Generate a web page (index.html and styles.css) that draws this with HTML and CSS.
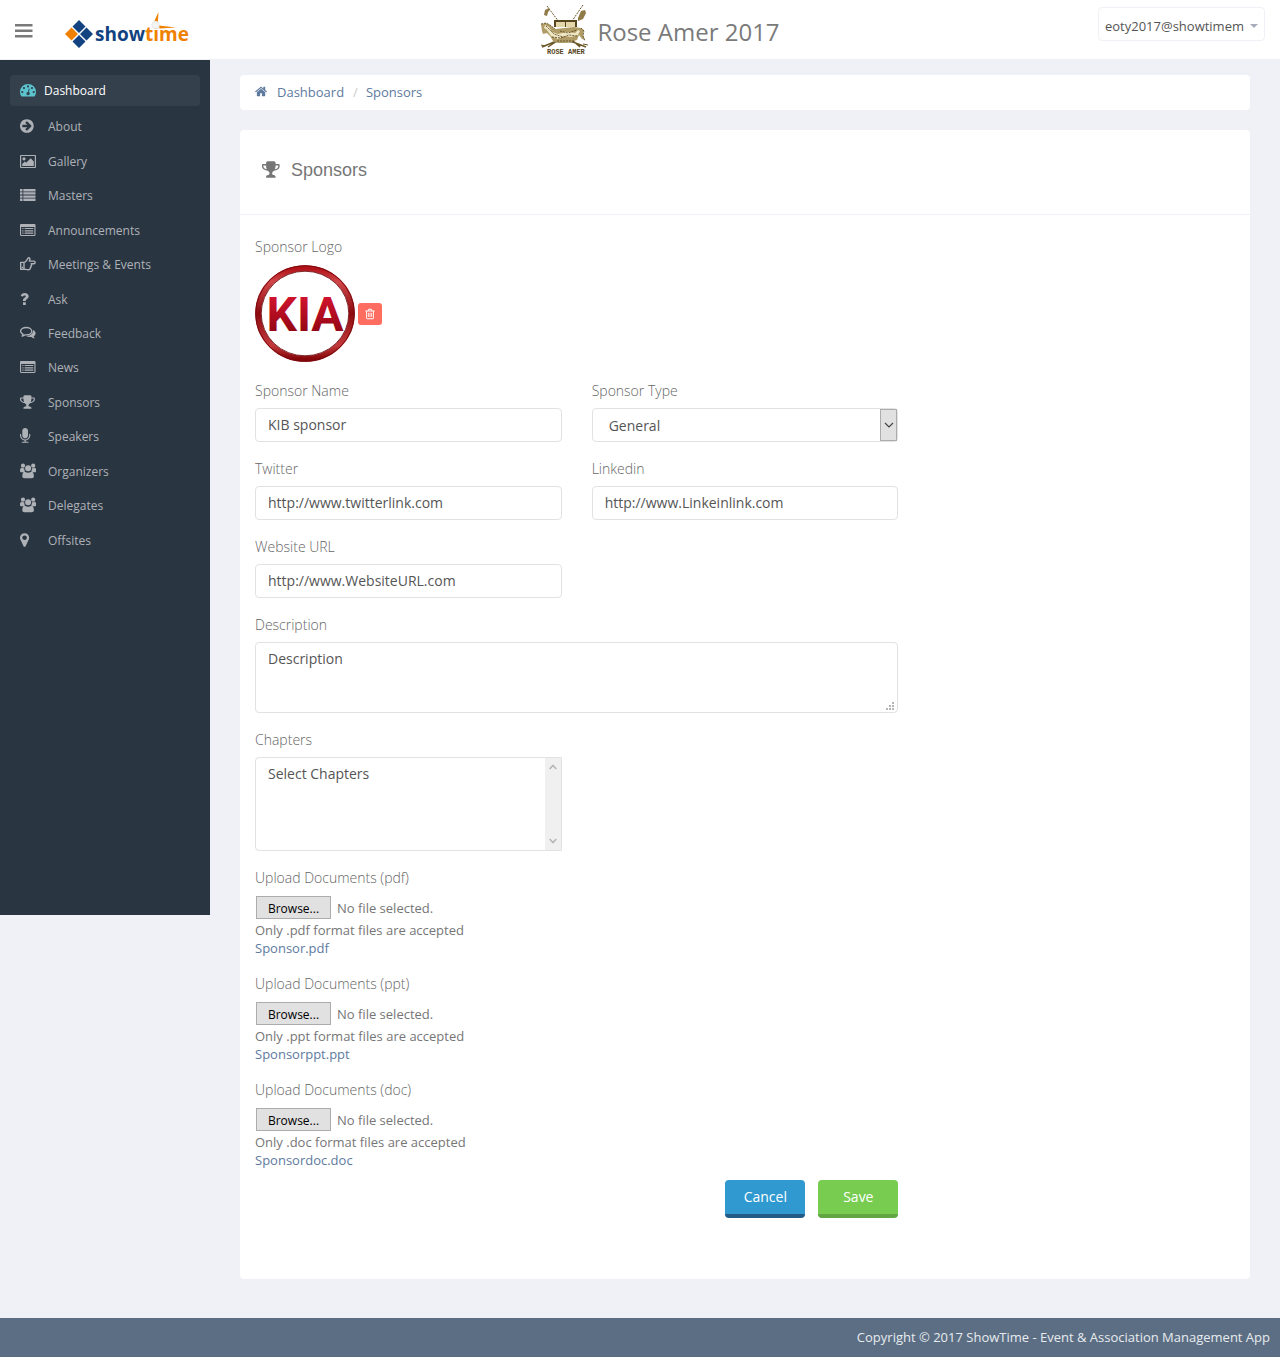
FILE: index.html
```html
<!DOCTYPE html>
<html lang="en">
<head>
<meta charset="utf-8">
<meta name="viewport" content="width=device-width, initial-scale=1">
<title>Sponsors - ShowTime</title>
<link rel="stylesheet" href="styles.css">
</head>
<body>
<svg class="sprite" aria-hidden="true">
  <symbol id="i-dash" viewBox="0 0 16 16"><path fill-rule="evenodd" d="M8 2a8 8 0 0 0-8 8c0 1.500.4 2.900 1.200 4.100.1.200.3.300.5.300h12.600c.2 0 .4-.1.500-.3A7.800 7.800 0 0 0 16 10a8 8 0 0 0-8-8zM2.300 9a1.100 1.100 0 1 1 0 2.200 1.100 1.100 0 0 1 0-2.200zM4 5a1.100 1.100 0 1 1 0 2.200A1.100 1.100 0 0 1 4 5zm4-1.700a1.100 1.100 0 1 1 0 2.200 1.100 1.100 0 0 1 0-2.200zm4 1.700a1.100 1.100 0 1 1 0 2.200A1.100 1.100 0 0 1 12 5zm1.700 4a1.100 1.100 0 1 1 0 2.200 1.100 1.100 0 0 1 0-2.200zM8.800 6.600l.9.200-.8 3.300a1.700 1.700 0 1 1-.9-.2z"/></symbol>
  <symbol id="i-about" viewBox="128 0 1792 1792"><path d="M1413 896q0-27-18-45l-362-362-91-91q-18-18-45-18t-45 18l-91 91q-18 18-18 45t18 45l189 189h-502q-26 0-45 19t-19 45v128q0 26 19 45t45 19h502l-189 189q-19 19-19 45t19 45l91 91q18 18 45 18t45-18l91-91 362-362q18-18 18-45zm251 0q0 209-103 385.500t-279.500 279.500-385.500 103-385.500-103-279.500-279.500-103-385.500 103-385.500 279.500-279.500 385.500-103 385.500 103 279.500 279.500 103 385.500z"/></symbol>
  <symbol id="i-image" viewBox="0 0 16 16"><path fill-rule="evenodd" d="M1 2h14a1 1 0 0 1 1 1v11a1 1 0 0 1-1 1H1a1 1 0 0 1-1-1V3a1 1 0 0 1 1-1zm.2 1.100v10.800h13.600V3.100zM4 4.200a1.600 1.600 0 1 1 0 3.200 1.600 1.600 0 0 1 0-3.200zM2.200 13v-2l2.600-2.600L6.200 9.800l4.500-4.500 3.100 3.200V13z"/></symbol>
  <symbol id="i-list" viewBox="0 0 16 16"><path d="M0 2h2.500v2.400H0zm3.300 0H15.500v2.400H3.300zM0 5.200h2.500v2.400H0zm3.300 0H15.500v2.400H3.300zM0 8.400h2.500v2.400H0zm3.300 0H15.500v2.400H3.300zM0 11.600h2.500V14H0zm3.300 0H15.500V14H3.300z"/></symbol>
  <symbol id="i-alt" viewBox="0 0 16 16"><path fill-rule="evenodd" d="M1.200 2h13.100c.7 0 1.200.5 1.200 1.200v9.600c0 .7-.5 1.200-1.200 1.200H1.200C.5 14 0 13.500 0 12.800V3.200C0 2.500.5 2 1.200 2zM1.100 5v7.900h13.300V5zM2.300 6h1.200v1.100H2.300zm2.300 0h8.700v1.100H4.600zM2.300 8.300h1.200v1.100H2.300zm2.300 0h8.700v1.100H4.600zm-2.300 2.300h1.200v1.100H2.300zm2.300 0h8.700v1.100H4.600z"/></symbol>
  <symbol id="i-hand" viewBox="0 0 16 16"><path fill="none" stroke="currentColor" stroke-width="1.400" stroke-linejoin="round" d="M4 6.400H.7v6.800H4zM4 6.400c1.600 0 2.200-1.400 3-2.600.6-.9.800-2 1.700-2 1.300 0 1.500 1.300.7 3.300h4.500c1.600 0 1.600 2.600 0 2.600h-2.700c.7.700.6 1.700-.3 2.100.4.800.1 1.600-.6 1.900.2 1.300-.6 2-2 2-2 0-3-.5-4.300-.5"/><path d="M1.800 10.700h1.300V12H1.800z"/></symbol>
  <symbol id="i-ask" viewBox="0 0 16 16"><path d="M3 11.300h2.800V14H3zM.7 5C1.200 3 2.500 2 4.600 2 7 2 8.700 3.400 8.700 5.300c0 1.500-.8 2.200-1.900 2.900-.8.500-1 .8-1 1.700H3V9.200c0-1.400.8-2.100 1.900-2.800.7-.4.900-.7.900-1.100 0-.6-.5-.9-1.200-.9-.8 0-1.100.4-1.700 1.200z"/></symbol>
  <symbol id="i-comments" viewBox="0 0 16 16"><path fill="none" stroke="currentColor" stroke-width="1.300" stroke-linejoin="round" d="M6.200 2.500c3.100 0 5.600 1.600 5.600 3.700s-2.500 3.700-5.600 3.700l-1.200-.1c-.8.700-1.700 1.200-2.900 1.400.5-.6.800-1.200.9-2C1.500 8.500.6 7.500.6 6.200c0-2.100 2.500-3.700 5.600-3.700z"/><path d="M13 5c1.600.7 2.600 1.900 2.600 3.300 0 1.200-.8 2.300-2 3 .2.700.6 1.300 1.200 1.900-1.400 0-2.500-.6-3.400-1.300-2.200.3-4-.1-5.200-.9C10 11 13.200 9 13 5z"/></symbol>
  <symbol id="i-trophy" viewBox="64 0 1792 1792"><path d="M522 883q-74-162-74-371h-256v96q0 78 94.500 162t235.500 113zm1078-275v-96h-256q0 209-74 371 141-29 235.500-113t94.500-162zm128-128v128q0 71-41.500 143t-112 130-173 97.500-215.500 44.500q-42 54-95 95-38 34-52.500 72.500t-14.500 89.500q0 54 30.500 91t97.500 37q75 0 133.500 45.500t58.500 114.500v64q0 14-9 23t-23 9h-832q-14 0-23-9t-9-23v-64q0-69 58.500-114.500t133.500-45.500q67 0 97.500-37t30.500-91q0-51-14.500-89.500t-52.500-72.500q-53-41-95-95-113-5-215.500-44.500t-173-97.500-112-130-41.500-143v-128q0-40 28-68t68-28h288v-96q0-66 47-113t113-47h576q66 0 113 47t47 113v96h288q40 0 68 28t28 68z"/></symbol>
  <symbol id="i-mic" viewBox="320 0 1792 1792"><path d="M1472 704v128q0 221-147.500 384.500t-364.500 187.500v132h256q26 0 45 19t19 45-19 45-45 19h-640q-26 0-45-19t-19-45 19-45 45-19h256v-132q-217-24-364.500-187.500t-147.500-384.500v-128q0-26 19-45t45-19 45 19 19 45v128q0 185 131.500 316.500t316.500 131.500 316.500-131.500 131.500-316.500v-128q0-26 19-45t45-19 45 19 19 45zm-256-384v512q0 132-94 226t-226 94-226-94-94-226v-512q0-132 94-226t226-94 226 94 94 226z"/></symbol>
  <symbol id="i-users" viewBox="0 0 16 16"><circle cx="3" cy="2.700" r="2.100"/><circle cx="13.200" cy="2.700" r="2.100"/><circle cx="8.100" cy="5.200" r="3"/><path d="M4.300 5.300C3 5.600 1.500 4.700 1 4.900c-.7.300-1 1.500-1 3C0 8.800.6 9.300 1.500 9.300h2c.4-.5.900-.8 1.600-1-.7-.9-1-1.900-.8-3zm7.600 0c1.300.3 2.800-.6 3.300-.4.700.3 1 1.500 1 3 0 .9-.6 1.400-1.500 1.400h-2c-.4-.5-.9-.8-1.600-1 .7-.9 1-1.900.8-3zM5 8.700c1.900 1.300 4.300 1.300 6.200 0 1.800.1 2.700 1.800 2.700 4.400 0 1.400-.8 2.200-2.100 2.200H4.400c-1.300 0-2.100-.8-2.100-2.200 0-2.600.9-4.300 2.700-4.400z"/></symbol>
  <symbol id="i-pin" viewBox="384 0 1792 1792"><path d="M1152 640q0-106-75-181t-181-75-181 75-75 181 75 181 181 75 181-75 75-181zm256 0q0 109-33 179l-364 774q-16 33-47.500 52t-67.500 19-67.500-19-46.500-52l-365-774q-33-70-33-179 0-212 150-362t362-150 362 150 150 362z"/></symbol>
  <symbol id="i-home" viewBox="64 0 1792 1792"><path d="M1472 992v480q0 26-19 45t-45 19h-384v-384h-256v384h-384q-26 0-45-19t-19-45v-480q0-1 .5-3t.5-3l575-474 575 474q1 2 1 6zm223-69l-62 74q-8 9-21 11h-3q-13 0-21-7l-692-577-692 577q-12 8-24 7-13-2-21-11l-62-74q-8-10-7-23.500t11-21.500l719-599q32-26 76-26t76 26l244 204v-195q0-14 9-23t23-9h192q14 0 23 9t9 23v408l219 182q10 8 11 21.500t-7 23.500z"/></symbol>
  <symbol id="i-trash" viewBox="0 0 1792 1792"><path d="M704 736v576q0 14-9 23t-23 9h-64q-14 0-23-9t-9-23v-576q0-14 9-23t23-9h64q14 0 23 9t9 23zm256 0v576q0 14-9 23t-23 9h-64q-14 0-23-9t-9-23v-576q0-14 9-23t23-9h64q14 0 23 9t9 23zm256 0v576q0 14-9 23t-23 9h-64q-14 0-23-9t-9-23v-576q0-14 9-23t23-9h64q14 0 23 9t9 23zm128 724v-948h-896v948q0 22 7 40.500t14.500 27 10.500 8.500h832q3 0 10.500-8.500t14.500-27 7-40.500zm-672-1076h448l-48-117q-7-9-17-11h-317q-10 2-17 11zm928 32v64q0 14-9 23t-23 9h-96v948q0 83-47 143.500t-113 60.500h-832q-66 0-113-58.500t-47-141.500v-952h-96q-14 0-23-9t-9-23v-64q0-14 9-23t23-9h309l70-167q15-37 54-63t79-26h320q40 0 79 26t54 63l70 167h309q14 0 23 9t9 23z"/></symbol>
</svg>

<header class="topbar">
  <div class="brand">
    <button class="menu-toggle" type="button" aria-label="Toggle menu">
      <svg width="18" height="16" viewBox="0 0 18 16"><path fill="#7a7a7a" d="M0 0h17.500v2.500H0zm0 5.500h17.500V8H0zM0 11h17.500v2.500H0z"/></svg>
    </button>
    <a class="logo" href="#" aria-label="showtime">
      <svg width="128" height="40" viewBox="0 0 128 40">
        <path fill="#124280" d="M14 8l6.500 6.500L14 21l-6.500-6.500zM21.500 15.500L28 22l-6.500 6.500L15 22zM14 23l6.500 6.500L14 36l-6.500-6.500z"/>
        <path fill="#f08000" d="M6.500 15.500L13 22l-6.500 6.500L0 22z"/>
        <text class="logo-text" x="30" y="29"><tspan fill="#124280">show</tspan><tspan fill="#f08000">time</tspan></text>
        <path fill="#f08000" d="M93.500 0l-.6 10-3.500-1zM94 13.500l17 2-16.500 1z"/>
        <circle cx="90.500" cy="13" r="3.800" fill="#f4f4f4" stroke="#ddd" stroke-width=".6"/>
      </svg>
    </a>
  </div>
  <div class="event">
    <svg width="50" height="52" viewBox="0 0 50 52" aria-hidden="true">
      <g fill="none" stroke="#6b5628">
        <path stroke-width="1" stroke-dasharray="2 1" d="M7 2l12 16M43 1L32 17"/>
        <path stroke-width="1.500" d="M2 43l12-5 9-1 10 1 13 5M8 43l9-6M40 43l-8-7"/>
        <path stroke-width="1" d="M1 41l4 1M43 40l5 1"/>
      </g>
      <path fill="#8f7a48" d="M5 6l4-2 1 2-2 2-1 4-3-1zM38 14l3-7 4-1 1 3-3 6-5 2z"/>
      <path fill="#57451f" d="M14 16h23v7H14z"/>
      <path fill="#e3d6a8" d="M16 18h9v5h-9zm10 0h9v5h-9z"/>
      <path fill="#b09c66" d="M1 20l5-1 4 2 5 4 19-2 7 1 3 2-1 5 2 5-3-1-3-4-2 5-6 2-5 1H19l-6-2-3-5-3-3-4 1-1-3z"/>
      <path fill="#efe6c4" d="M5 21l4 2 3 5 6 2 9-2 8 1 3-3 2 1-2 4-7 2-7-1-6 3-7-3-4-6-3-2z"/>
      <path fill="none" stroke="#57451f" stroke-width=".8" stroke-dasharray="2 1" d="M1 20l5-1 4 2 5 4M12 33l9 1 8-3 8 1M6 22l8 8 9 3M20 27l8 2 9-3M17 37h17M41 24l3 3-1 5 2 5"/>
      <text class="crest-text" x="7" y="50">ROSE AMER</text>
    </svg>
    <span class="event-name">Rose Amer 2017</span>
  </div>
  <button class="user" type="button">eoty2017@showtimem <span class="caret"></span></button>
</header>

<div class="layout">
  <nav class="sidebar" aria-label="Main">
    <a class="dash" href="#"><svg class="icon"><use href="#i-dash"/></svg>Dashboard</a>
    <ul class="menu">
      <li><a href="#"><svg class="icon"><use href="#i-about"/></svg>About</a></li>
      <li><a href="#"><svg class="icon"><use href="#i-image"/></svg>Gallery</a></li>
      <li><a href="#"><svg class="icon"><use href="#i-list"/></svg>Masters</a></li>
      <li><a href="#"><svg class="icon"><use href="#i-alt"/></svg>Announcements</a></li>
      <li><a href="#"><svg class="icon"><use href="#i-hand"/></svg>Meetings &amp; Events</a></li>
      <li><a href="#"><svg class="icon"><use href="#i-ask"/></svg>Ask</a></li>
      <li><a href="#"><svg class="icon"><use href="#i-comments"/></svg>Feedback</a></li>
      <li><a href="#"><svg class="icon"><use href="#i-alt"/></svg>News</a></li>
      <li><a href="#"><svg class="icon"><use href="#i-trophy"/></svg>Sponsors</a></li>
      <li><a href="#"><svg class="icon"><use href="#i-mic"/></svg>Speakers</a></li>
      <li><a href="#"><svg class="icon"><use href="#i-users"/></svg>Organizers</a></li>
      <li><a href="#"><svg class="icon"><use href="#i-users"/></svg>Delegates</a></li>
      <li><a href="#"><svg class="icon"><use href="#i-pin"/></svg>Offsites</a></li>
    </ul>
  </nav>

  <main class="content">
    <nav class="breadcrumb" aria-label="Breadcrumb">
      <svg class="icon-home"><use href="#i-home"/></svg>
      <a href="#">Dashboard</a><span class="sep">/</span><a href="#">Sponsors</a>
    </nav>

    <section class="panel">
      <h1 class="panel-title"><svg class="icon-title"><use href="#i-trophy"/></svg>Sponsors</h1>
      <form class="form">
        <div class="field wide">
          <span class="label">Sponsor Logo</span>
          <div class="logo-row">
            <svg width="100" height="97" viewBox="0 0 100 97" role="img" aria-label="KIA">
              <defs>
                <linearGradient id="ring" x1="0" y1="0" x2="0" y2="1"><stop offset="0" stop-color="#b01218"/><stop offset=".15" stop-color="#d0474a"/><stop offset=".5" stop-color="#8d090e"/><stop offset=".85" stop-color="#c23a3c"/><stop offset="1" stop-color="#850509"/></linearGradient>
                <linearGradient id="word" x1="0" y1="0" x2="0" y2="1"><stop offset=".2" stop-color="#d0122d"/><stop offset=".85" stop-color="#8e0612"/></linearGradient>
              </defs>
              <ellipse cx="50" cy="48.500" rx="46.800" ry="45.300" fill="#fff" stroke="url(#ring)" stroke-width="6"/>
              <ellipse cx="50" cy="48.500" rx="49.300" ry="47.800" fill="none" stroke="#7a0a0e"/>
              <ellipse cx="50" cy="48.500" rx="43.800" ry="42.300" fill="none" stroke="#7d2a2c"/>
              <text class="kia-text" x="50" y="66" text-anchor="middle" fill="url(#word)">KIA</text>
            </svg>
            <button class="delete" type="button" aria-label="Delete logo"><svg><use href="#i-trash"/></svg></button>
          </div>
        </div>
        <div class="field">
          <label class="label" for="name">Sponsor Name</label>
          <input class="control text" id="name" type="text" value="KIB sponsor">
        </div>
        <div class="field">
          <label class="label" for="type">Sponsor Type</label>
          <div class="overlay-box">
            <select class="control type-select" id="type"><option>General</option></select>
            <span class="select-arrow" aria-hidden="true"><svg width="10" height="6" viewBox="0 0 10 6"><path d="M1 1l4 4 4-4" fill="none" stroke="#444" stroke-width="1.200"/></svg></span>
          </div>
        </div>
        <div class="field">
          <label class="label" for="twitter">Twitter</label>
          <input class="control text" id="twitter" type="text" value="http://www.twitterlink.com">
        </div>
        <div class="field">
          <label class="label" for="linkedin">Linkedin</label>
          <input class="control text" id="linkedin" type="text" value="http://www.Linkeinlink.com">
        </div>
        <div class="field">
          <label class="label" for="website">Website URL</label>
          <input class="control text" id="website" type="text" value="http://www.WebsiteURL.com">
        </div>
        <div class="field wide">
          <label class="label" for="description">Description</label>
          <div class="overlay-box">
            <textarea class="control area" id="description">Description</textarea>
            <svg class="grip" width="8" height="8" viewBox="0 0 8 8" aria-hidden="true"><path fill="#b5b5b5" d="M6 0h2v2H6zM6 3h2v2H6zM3 3h2v2H3zM6 6h2v2H6zM3 6h2v2H3zM0 6h2v2H0z"/></svg>
          </div>
        </div>
        <div class="field">
          <label class="label" for="chapters">Chapters</label>
          <div class="overlay-box">
            <select class="control list" id="chapters" multiple size="4"><option>Select Chapters</option></select>
            <span class="scroll" aria-hidden="true">
              <svg width="8" height="6" viewBox="0 0 8 6"><path d="M.7 5L4 1.500 7.300 5" fill="none" stroke="#b8b8b8" stroke-width="1.800"/></svg>
              <svg width="8" height="6" viewBox="0 0 8 6"><path d="M.7 1L4 4.500 7.300 1" fill="none" stroke="#b8b8b8" stroke-width="1.800"/></svg>
            </span>
          </div>
        </div>
        <div class="field wide upload">
          <label class="label" for="pdf">Upload Documents (pdf)</label>
          <div class="file"><span class="browse">Browse...</span><span>No file selected.</span><input id="pdf" type="file" accept=".pdf"></div>
          <p>Only .pdf format files are accepted</p>
          <a href="#">Sponsor.pdf</a>
        </div>
        <div class="field wide upload">
          <label class="label" for="ppt">Upload Documents (ppt)</label>
          <div class="file"><span class="browse">Browse...</span><span>No file selected.</span><input id="ppt" type="file" accept=".ppt"></div>
          <p>Only .ppt format files are accepted</p>
          <a href="#">Sponsorppt.ppt</a>
        </div>
        <div class="field wide upload">
          <label class="label" for="doc">Upload Documents (doc)</label>
          <div class="file"><span class="browse">Browse...</span><span>No file selected.</span><input id="doc" type="file" accept=".doc"></div>
          <p>Only .doc format files are accepted</p>
          <a href="#">Sponsordoc.doc</a>
        </div>
        <div class="actions">
          <button class="btn cancel" type="button">Cancel</button>
          <button class="btn save" type="submit">Save</button>
        </div>
      </form>
    </section>
  </main>
</div>

<footer class="footer">Copyright © 2017 ShowTime - Event &amp; Association Management App</footer>
</body>
</html>
```
FILE: styles.css
```css
* { box-sizing: border-box; }

body {
  margin: 0;
  min-height: 100vh;
  display: flex;
  flex-direction: column;
  background: #f0f1f6;
  color: #767676;
  font: 13px/18px "Open Sans", sans-serif;
}

a { color: #5e7a9e; text-decoration: none; }
button, input, select, textarea { font: inherit; }
svg { fill: currentColor; flex: none; }
.sprite { position: absolute; width: 0; height: 0; }

/* Top bar */
.topbar {
  display: grid;
  grid-template-columns: 1fr auto 1fr;
  align-items: start;
  height: 60px;
  padding: 0 15px;
  background: #fff;
  border-bottom: 1px solid #f0f1f6;
}
.brand { display: flex; align-items: center; gap: 32px; padding-top: 12px; }
.menu-toggle { padding: 0; border: 0; background: none; height: 16px; display: flex; }
.logo { display: flex; }
.logo-text { font: 700 19px "Open Sans", sans-serif; }
.event { display: flex; align-items: center; gap: 7px; padding: 4px 0 0 40px; }
.event-name { font-size: 24px; line-height: 32px; padding-top: 4px; color: #7a7a7a; }
.crest-text { font: 700 7px "Liberation Mono", monospace; fill: #57451f; }
.user {
  justify-self: end;
  display: flex;
  align-items: center;
  gap: 6px;
  height: 34px;
  margin-top: 7px;
  padding: 4px 6px 0;
  background: #fff;
  border: 1px solid #f0f1f6;
  border-radius: 4px;
  color: #555;
}
.caret { border: 4px solid transparent; border-top-color: #a7adba; border-bottom: 0; }

/* Sidebar */
.layout { flex: 1; display: flex; align-items: flex-start; }
.sidebar {
  flex: none;
  width: 210px;
  min-height: 855px;
  padding: 15px 10px;
  background: #2a3542;
  font-size: 12px;
}
.icon { width: 16px; height: 16px; margin-bottom: 2px; overflow: visible; }
.dash {
  display: flex;
  align-items: center;
  gap: 8px;
  height: 31px;
  padding: 0 10px;
  border-radius: 4px;
  background: #35404d;
  color: #fff;
}
.dash .icon { color: #5bc4cf; }
.menu {
  display: grid;
  grid-auto-rows: 1fr;
  height: 448px;
  margin: 4px 0 0;
  padding: 0;
  list-style: none;
}
.menu a { display: flex; align-items: center; gap: 12px; height: 100%; padding: 0 10px; color: #aeb2b7; }

/* Content */
.content { flex: 1; min-width: 0; padding: 15px 30px 39px; }
.breadcrumb {
  display: flex;
  align-items: center;
  height: 35px;
  padding: 0 15px 2px;
  margin-bottom: 20px;
  background: #fff;
  border-radius: 4px;
}
.icon-home { width: 13px; height: 13px; margin-right: 9px; color: #5e7a9e; }
.sep { padding: 0 8px 0 9px; color: #ccc; }
.panel { background: #fff; border-radius: 4px; padding-bottom: 61px; }
.panel-title {
  display: flex;
  align-items: center;
  gap: 10px;
  height: 85px;
  margin: 0;
  padding: 0 22px 4px;
  border-bottom: 1px solid #f0f1f6;
  font: 400 18px/20px "Liberation Sans", Arial, sans-serif;
}
.icon-title { width: 19px; height: 19px; margin-bottom: 2px; }

.form {
  display: grid;
  grid-template-columns: 1fr 1fr;
  gap: 17px 30px;
  width: calc(100% * 2 / 3 - 30px);
  margin-left: 15px;
  padding-top: 22px;
}
.field { grid-column-start: 1; min-width: 0; }
.field:nth-child(3), .field:nth-child(5) { grid-column-start: 2; }
.field.wide { grid-column: 1 / -1; }
.label { display: block; margin-bottom: 7px; color: #666; font-size: 14px; font-weight: 300; line-height: 20px; }
.logo-row { display: flex; align-items: center; gap: 3px; padding: 1px 0 2px; }
.kia-text { font: 700 48px Roboto, sans-serif; }
.delete {
  display: grid;
  place-items: center;
  width: 24px;
  height: 22px;
  padding: 0;
  border: 0;
  border-radius: 3px;
  background: #ff6c60;
  color: #fff;
}
.delete svg { width: 12px; height: 12px; }
.control {
  display: block;
  width: 100%;
  height: 34px;
  margin: 0;
  padding: 6px 12px;
  border: 1px solid #e2e2e4;
  border-radius: 4px;
  background: #fff;
  color: #555;
  font-size: 14px;
  line-height: 20px;
  outline: 0;
  appearance: none;
}
.text { padding: 5px 12px 7px; }
.overlay-box { position: relative; }
.type-select { padding: 7px 16px 5px; }
.select-arrow {
  position: absolute;
  inset: 1px 1px 1px auto;
  width: 17px;
  display: grid;
  place-items: center;
  border: 1px solid #acacac;
  background: #e1e1e1;
  pointer-events: none;
}
.area { height: 71px; resize: none; }
.grip { position: absolute; right: 4px; bottom: 3px; pointer-events: none; }
.list { height: 94px; overflow: hidden; border-radius: 4px 0 0 4px; }
.list option { padding: 0; min-height: 20px; }
.scroll {
  position: absolute;
  inset: 1px 1px 1px auto;
  width: 16px;
  padding: 6px 4px;
  display: flex;
  flex-direction: column;
  justify-content: space-between;
  background: #f0f0f0;
  pointer-events: none;
}

.file { position: relative; display: flex; align-items: center; gap: 6px; width: max-content; padding: 1px 1px 2px; }
.file input { position: absolute; inset: 0; width: 100%; opacity: 0; }
.browse {
  width: 75px;
  height: 23px;
  border: 1px solid #acacac;
  background: #e1e1e1;
  color: #000;
  font-size: 12px;
  line-height: 23px;
  text-align: center;
}
.upload p { margin: 0; }
.upload a { display: block; }

.actions { grid-column: 1 / -1; display: flex; justify-content: flex-end; gap: 13px; margin-top: -6px; }
.btn {
  width: 80px;
  height: 38px;
  padding: 0;
  border: 0;
  border-bottom: 4px solid #225b86;
  border-radius: 4px;
  background: #2f99d0;
  color: #fff;
  font-size: 14px;
}
.save { background: #78cd51; border-color: #61a642; }

.footer { height: 39px; padding: 0 10px; background: #5b6e84; color: #e8ebee; line-height: 39px; text-align: right; }
```
